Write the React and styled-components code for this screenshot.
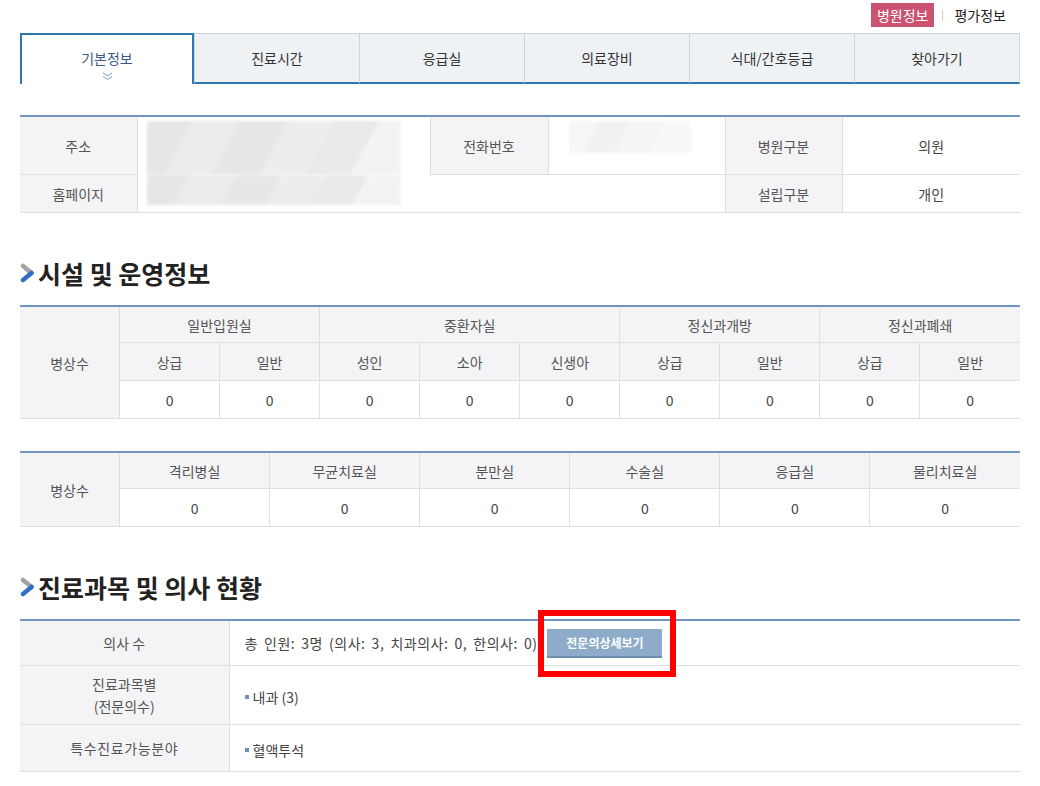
import React from "react";
import styled, { createGlobalStyle } from "styled-components";

const GlobalStyle = createGlobalStyle`
  html, body {
    margin: 0;
    padding: 0;
    background: #fff;
  }
  body {
    font-family: "Noto Sans CJK KR", "Noto Sans", "Liberation Sans", sans-serif;
    color: #444;
  }
`;

const Page = styled.div`
  width: 1000px;
  margin-left: 20px;
  padding-bottom: 14px;
`;

const TopLinks = styled.div`
  display: flex;
  justify-content: flex-end;
  align-items: center;
  height: 33px;
  padding-right: 14px;
  box-sizing: border-box;
  padding-bottom: 3px;
`;

const Badge = styled.span`
  background: #cc5272;
  color: #fff;
  font-size: 14px;
  height: 24px;
  line-height: 24px;
  padding: 0 6px;
`;

const Divider = styled.span`
  width: 1px;
  height: 11px;
  background: #ccc;
  margin: 0 11px 0 8px;
`;

const PlainLink = styled.span`
  font-size: 14px;
  color: #222;
`;

const Tabs = styled.ul`
  display: flex;
  margin: 0;
  padding: 0;
  list-style: none;
  height: 51px;
`;

const Tab = styled.li`
  flex: ${(p) => (p.$active ? "0 0 174px" : "1")};
  display: flex;
  flex-direction: column;
  align-items: center;
  justify-content: center;
  box-sizing: border-box;
  font-size: 14px;
  color: ${(p) => (p.$active ? "#3a5a85" : "#333")};
  background: ${(p) => (p.$active ? "#fff" : "#eef2f5")};
  border-top: ${(p) => (p.$active ? "2px solid #2e78b0" : "1px solid #cdd5dc")};
  border-left: ${(p) => (p.$active ? "2px solid #2e78b0" : "1px solid #cdd5dc")};
  border-right: ${(p) => (p.$active ? "2px solid #2e78b0" : "none")};
  border-bottom: ${(p) => (p.$active ? "none" : "2px solid #2e78b0")};
  &:last-child {
    border-right: ${(p) => (p.$active ? "2px solid #2e78b0" : "1px solid #cdd5dc")};
  }
`;

const TabLabel = styled.span`
  line-height: 20px;
  margin-top: ${(p) => (p.$active ? "10px" : "0")};
`;

const Chevron = styled.svg`
  display: block;
  margin-top: 4px;
`;

const Table = styled.table`
  width: 1000px;
  border-collapse: collapse;
  table-layout: fixed;
  border-top: 2px solid #7095c1;
  border-bottom: 1px solid #aeb1b6;
  margin-top: ${(p) => p.$top || "0"};
  font-size: 14px;
`;

const Th = styled.th`
  background: #f4f4f6;
  color: #555;
  font-weight: normal;
  text-align: center;
  border: 1px solid #dedfe2;
  border-top: none;
  height: ${(p) => p.$h || "36px"};
  padding: 0;
  line-height: 22px;
  letter-spacing: ${(p) => p.$spread || "0"};
  &:first-child {
    border-left: none;
  }
  &:last-child {
    border-right: none;
  }
`;

const Td = styled.td`
  color: #444;
  text-align: ${(p) => (p.$left ? "left" : "center")};
  border: 1px solid #dedfe2;
  border-top: none;
  height: ${(p) => p.$h || "36px"};
  padding: ${(p) => (p.$left ? "0 15px" : "0")};
  &:last-child {
    border-right: none;
  }
`;

const MosaicCell = styled.td`
  border: 1px solid #dedfe2;
  border-top: none;
  border-bottom: ${(p) => (p.$open ? "none" : "1px solid #dedfe2")};
  padding: 0 0 0 9px;
  vertical-align: ${(p) => p.$align || "middle"};
`;

const Mosaic = styled.div`
  width: ${(p) => p.$w}px;
  height: ${(p) => p.$h}px;
  background: ${(p) =>
    p.$faint
      ? "linear-gradient(115deg, #f7f7f7 0 22%, #f1f1f1 22% 45%, #f5f5f5 45% 70%, #f8f8f8 70%)"
      : "linear-gradient(118deg, #e6e6e6 0 16%, #ececec 16% 33%, #e7e7e7 33% 50%, #ededed 50% 66%, #eaeaea 66% 82%, #f3f3f3 82%)"};
  filter: blur(1.5px);
`;

const SectionTitle = styled.h2`
  display: flex;
  align-items: center;
  gap: 1px;
  margin: ${(p) => p.$mt || "45px"} 0 17px;
  font-size: 25px;
  line-height: 30px;
  font-weight: bold;
  color: #222;
`;

const Inline = styled.div`
  display: flex;
  align-items: center;
`;

const CountText = styled.span`
  letter-spacing: 0.5px;
  word-spacing: 2.5px;
`;

const ButtonWrap = styled.span`
  position: relative;
  display: inline-flex;
  margin-left: 10px;
`;

const DetailButton = styled.button`
  width: 115px;
  height: 29px;
  background: #8eabc9;
  border: none;
  border-bottom: 2px solid #6f8daf;
  color: #fff;
  font-family: inherit;
  font-size: 12px;
  font-weight: bold;
  padding: 0;
`;

const Highlight = styled.span`
  position: absolute;
  left: -9px;
  top: -19px;
  right: -14px;
  bottom: -19px;
  border: 6px solid #ff0000;
  pointer-events: none;
`;

const Bullet = styled.span`
  display: inline-flex;
  align-items: center;
  &::before {
    content: "";
    width: 4px;
    height: 4px;
    background: #6c8fc0;
    margin-right: 4px;
  }
`;

function TitleIcon() {
  return (
    <svg width="17" height="22" viewBox="0 0 17 22">
      <line x1="3" y1="4" x2="11.5" y2="11" stroke="#a3a3a3" strokeWidth="4.5" strokeLinecap="round" />
      <line x1="11.5" y1="11" x2="3" y2="18" stroke="#2f6fc4" strokeWidth="4.5" strokeLinecap="round" />
    </svg>
  );
}

const tabs = ["기본정보", "진료시간", "응급실", "의료장비", "식대/간호등급", "찾아가기"];

const wardGroups = [
  { name: "일반입원실", items: ["상급", "일반"] },
  { name: "중환자실", items: ["성인", "소아", "신생아"] },
  { name: "정신과개방", items: ["상급", "일반"] },
  { name: "정신과폐쇄", items: ["상급", "일반"] },
];

const specialRooms = ["격리병실", "무균치료실", "분만실", "수술실", "응급실", "물리치료실"];

export default function App() {
  const wardCols = wardGroups.flatMap((g) => g.items);

  return (
    <Page>
      <GlobalStyle />
      <TopLinks>
        <Badge>병원정보</Badge>
        <Divider />
        <PlainLink>평가정보</PlainLink>
      </TopLinks>

      <Tabs>
        {tabs.map((t, i) => (
          <Tab key={t} $active={i === 0}>
            <TabLabel $active={i === 0}>{t}</TabLabel>
            {i === 0 && (
              <Chevron width="11" height="9" viewBox="0 0 11 9">
                <polyline points="1,1 5.5,4 10,1" fill="none" stroke="#7c9cc6" strokeWidth="1" />
                <polyline points="1,4.5 5.5,7.5 10,4.5" fill="none" stroke="#7c9cc6" strokeWidth="1" />
              </Chevron>
            )}
          </Tab>
        ))}
      </Tabs>

      <Table $top="31px">
        <colgroup>
          <col style={{ width: 117 }} />
          <col style={{ width: 293 }} />
          <col style={{ width: 118 }} />
          <col style={{ width: 177 }} />
          <col style={{ width: 117 }} />
          <col />
        </colgroup>
        <tbody>
          <tr>
            <Th $h="57px">주소</Th>
            <MosaicCell $open $align="bottom">
              <Mosaic $w={254} $h={54} />
            </MosaicCell>
            <Th $h="57px">전화번호</Th>
            <MosaicCell $align="top" style={{ paddingLeft: 20, paddingTop: 4 }}>
              <Mosaic $w={122} $h={32} $faint />
            </MosaicCell>
            <Th $h="57px">병원구분</Th>
            <Td $h="57px">의원</Td>
          </tr>
          <tr>
            <Th $h="37px">홈페이지</Th>
            <MosaicCell colSpan={3} $align="top">
              <Mosaic $w={254} $h={30} />
            </MosaicCell>
            <Th $h="37px">설립구분</Th>
            <Td $h="37px">개인</Td>
          </tr>
        </tbody>
      </Table>

      <SectionTitle>
        <TitleIcon />
        시설 및 운영정보
      </SectionTitle>

      <Table>
        <tbody>
          <tr>
            <Th rowSpan={3} style={{ width: 99 }}>병상수</Th>
            {wardGroups.map((g) => (
              <Th key={g.name} colSpan={g.items.length} $h="35px">
                {g.name}
              </Th>
            ))}
          </tr>
          <tr>
            {wardCols.map((c, i) => (
              <Th key={i} $h="37px" style={{ borderLeft: "1px solid #dedfe2" }}>
                {c}
              </Th>
            ))}
          </tr>
          <tr>
            {wardCols.map((c, i) => (
              <Td key={i} $h="37px">0</Td>
            ))}
          </tr>
        </tbody>
      </Table>

      <Table $top="32px">
        <tbody>
          <tr>
            <Th rowSpan={2} style={{ width: 99 }}>병상수</Th>
            {specialRooms.map((r) => (
              <Th key={r} $h="35px">{r}</Th>
            ))}
          </tr>
          <tr>
            {specialRooms.map((r) => (
              <Td key={r} $h="37px">0</Td>
            ))}
          </tr>
        </tbody>
      </Table>

      <SectionTitle>
        <TitleIcon />
        진료과목 및 의사 현황
      </SectionTitle>

      <Table>
        <colgroup>
          <col style={{ width: 209 }} />
          <col />
        </colgroup>
        <tbody>
          <tr>
            <Th $h="44px">의사 수</Th>
            <Td $left $h="44px">
              <Inline>
                <CountText>총 인원: 3명 (의사: 3, 치과의사: 0, 한의사: 0)</CountText>
                <ButtonWrap>
                  <DetailButton>전문의상세보기</DetailButton>
                  <Highlight />
                </ButtonWrap>
              </Inline>
            </Td>
          </tr>
          <tr>
            <Th $h="58px">
              진료과목별
              <br />
              (전문의수)
            </Th>
            <Td $left $h="58px">
              <Bullet>내과 (3)</Bullet>
            </Td>
          </tr>
          <tr>
            <Th $h="46px" $spread="0.6px">특수진료가능분야</Th>
            <Td $left $h="46px">
              <Bullet>혈액투석</Bullet>
            </Td>
          </tr>
        </tbody>
      </Table>
    </Page>
  );
}
